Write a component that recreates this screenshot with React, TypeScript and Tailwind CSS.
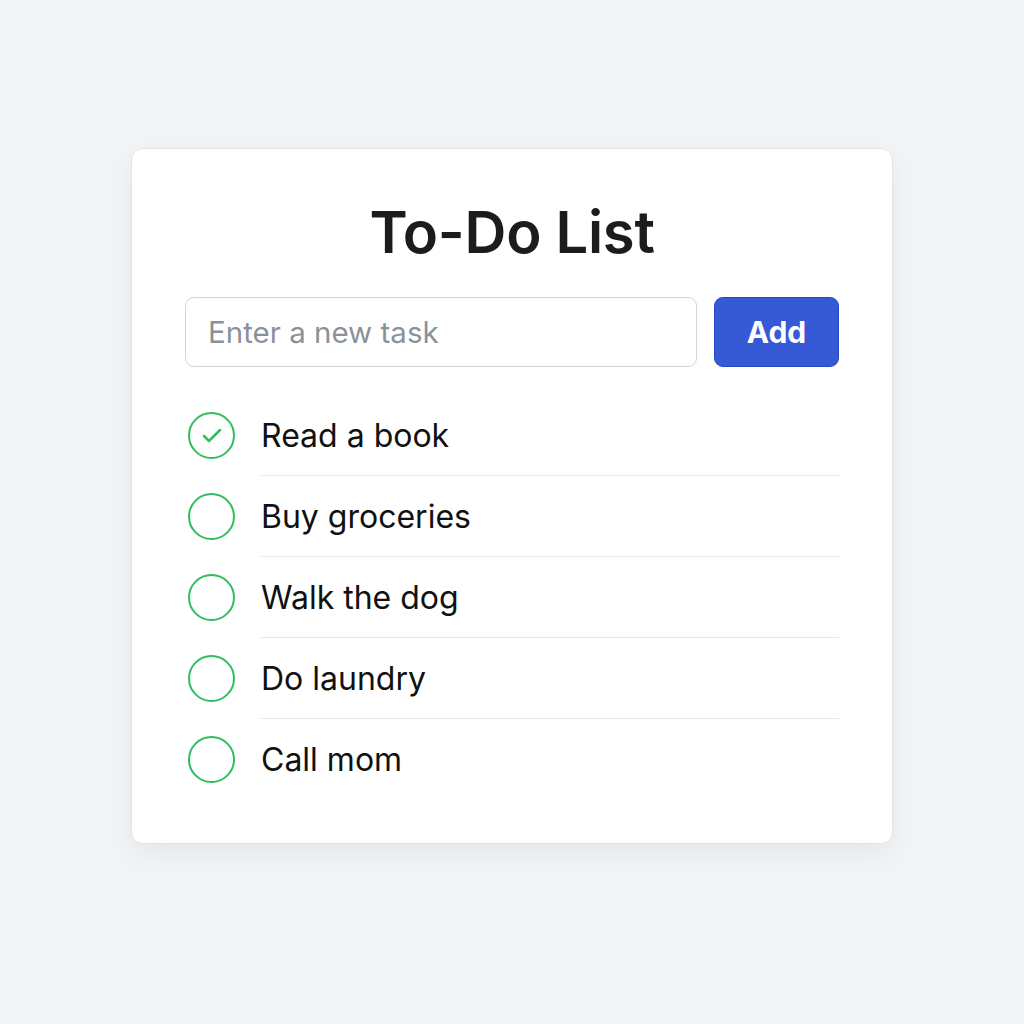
import { Check } from "lucide-react";

interface Task {
  title: string;
  done: boolean;
}

const tasks: Task[] = [
  { title: "Read a book", done: true },
  { title: "Buy groceries", done: false },
  { title: "Walk the dog", done: false },
  { title: "Do laundry", done: false },
  { title: "Call mom", done: false },
];

function TaskRow({ task, last }: { task: Task; last: boolean }) {
  return (
    <li className="flex items-center gap-x-[26px]">
      <div className="flex-shrink-0 w-[47px] h-[47px] rounded-full border-[2.5px] border-[#2ebd5f] flex items-center justify-center">
        {task.done && (
          <Check className="w-[24px] h-[24px] text-[#2ebd5f]" strokeWidth={2.5} />
        )}
      </div>
      <div
        className={`flex-1 h-[81px] flex items-center text-[32px] text-[#111] pt-[1px] ${
          last ? "" : "border-b border-[#e5e7eb]"
        }`}
      >
        {task.title}
      </div>
    </li>
  );
}

export default function App() {
  return (
    <div
      className="min-h-screen w-full bg-[#f3f4f6] flex items-start justify-center pt-[148px]"
      style={{ fontFamily: "Inter, 'Noto Sans', sans-serif" }}
    >
      <div className="w-[762px] h-[696px] bg-white rounded-[12px] border border-[#e2e4e8] shadow-[0_10px_30px_rgba(0,0,0,0.06)] px-[53px] pt-[48px]">
        <h1 className="text-center text-[58px] font-semibold text-[#1c1c1e] leading-[70px] tracking-[-0.3px]">
          To-Do List
        </h1>
        <div className="flex gap-x-[17px] mt-[30px]">
          <input
            className="flex-1 h-[70px] rounded-[9px] border border-[#d1d5db] px-[22px] text-[29.5px] placeholder:text-[#8b9199] outline-none"
            placeholder="Enter a new task"
          />
          <button className="w-[125px] h-[70px] rounded-[9px] bg-[#3659d6] border border-[#2448c8] text-white text-[30px] font-bold">
            Add
          </button>
        </div>
        <ul className="mt-[28px] pl-[3px]">
          {tasks.map((t, i) => (
            <TaskRow key={t.title} task={t} last={i === tasks.length - 1} />
          ))}
        </ul>
      </div>
    </div>
  );
}
